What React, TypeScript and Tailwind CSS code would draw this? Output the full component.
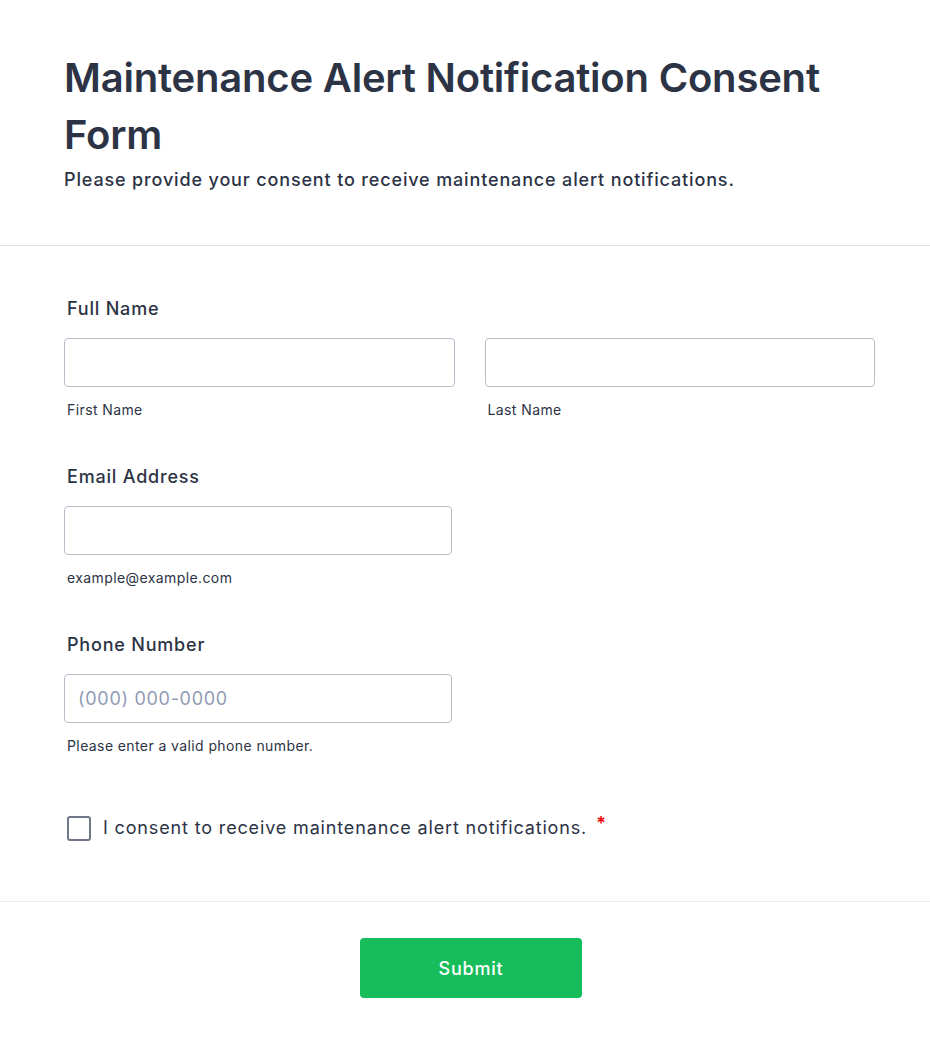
import React from "react";

export default function App() {
  return (
    <div className="min-h-[1047px] bg-white text-[#2c3345]" style={{ fontFamily: "Inter, 'Noto Sans', sans-serif" }}>
      <div className="px-[64px] pt-[49px] pb-[54px] border-b border-[#dfe1e6]">
        <h1 className="text-[40px] leading-[57px] font-semibold tracking-[-0.2px]">
          Maintenance Alert Notification Consent Form
        </h1>
        <p className="text-[18px] leading-[22px] font-medium mt-[6px] tracking-[0.85px]">
          Please provide your consent to receive maintenance alert notifications.
        </p>
      </div>

      <div className="pl-[64px] pr-[55px] pt-[50px] pb-[60px] border-b border-[#eceef2]">
        <div className="pl-[3px] text-[18px] leading-[26px] font-medium tracking-[0.8px]">Full Name</div>
        <div className="mt-[16px] grid grid-cols-2 gap-[30px]">
          <div>
            <input className="block w-full h-[49px] rounded-[4px] border border-[#b8bdc9] outline-none px-[14px]" />
            <div className="pl-[3px] mt-[14px] text-[14px] leading-[18px] tracking-[0.4px]">First Name</div>
          </div>
          <div>
            <input className="block w-full h-[49px] rounded-[4px] border border-[#b8bdc9] outline-none px-[14px]" />
            <div className="pl-[3px] mt-[14px] text-[14px] leading-[18px] tracking-[0.4px]">Last Name</div>
          </div>
        </div>

        <div className="mt-[45px] pl-[3px] text-[18px] leading-[26px] font-medium tracking-[0.8px]">Email Address</div>
        <input className="mt-[16px] block w-[388px] h-[49px] rounded-[4px] border border-[#b8bdc9] outline-none px-[14px]" />
        <div className="pl-[3px] mt-[14px] text-[14px] leading-[18px] tracking-[0.4px]">example@example.com</div>

        <div className="mt-[45px] pl-[3px] text-[18px] leading-[26px] font-medium tracking-[0.8px]">Phone Number</div>
        <input
          placeholder="(000) 000-0000"
          className="mt-[16px] block w-[388px] h-[49px] rounded-[4px] border border-[#b8bdc9] outline-none px-[13px] text-[18px] tracking-[0.7px] placeholder:text-[#8f9bb3]"
        />
        <div className="pl-[3px] mt-[14px] text-[14px] leading-[18px] tracking-[0.4px]">Please enter a valid phone number.</div>

        <div className="mt-[60px] pl-[3px] flex items-center">
          <span className="w-[24px] h-[25px] rounded-[3px] border-2 border-[#6f7789] bg-white shrink-0" />
          <span className="ml-[12px] text-[18px] leading-[26px] tracking-[0.85px]">
            I consent to receive maintenance alert notifications.
          </span>
          <span className="ml-[9px] text-[#f50000] text-[18px] leading-[26px] self-start -mt-[4px] font-semibold">*</span>
        </div>
      </div>

      <div className="flex justify-center pt-[36px] pl-[12px]">
        <button className="w-[222px] h-[60px] rounded-[4px] bg-[#18bd5b] text-white text-[18px] font-medium tracking-[0.8px]">
          Submit
        </button>
      </div>
    </div>
  );
}
